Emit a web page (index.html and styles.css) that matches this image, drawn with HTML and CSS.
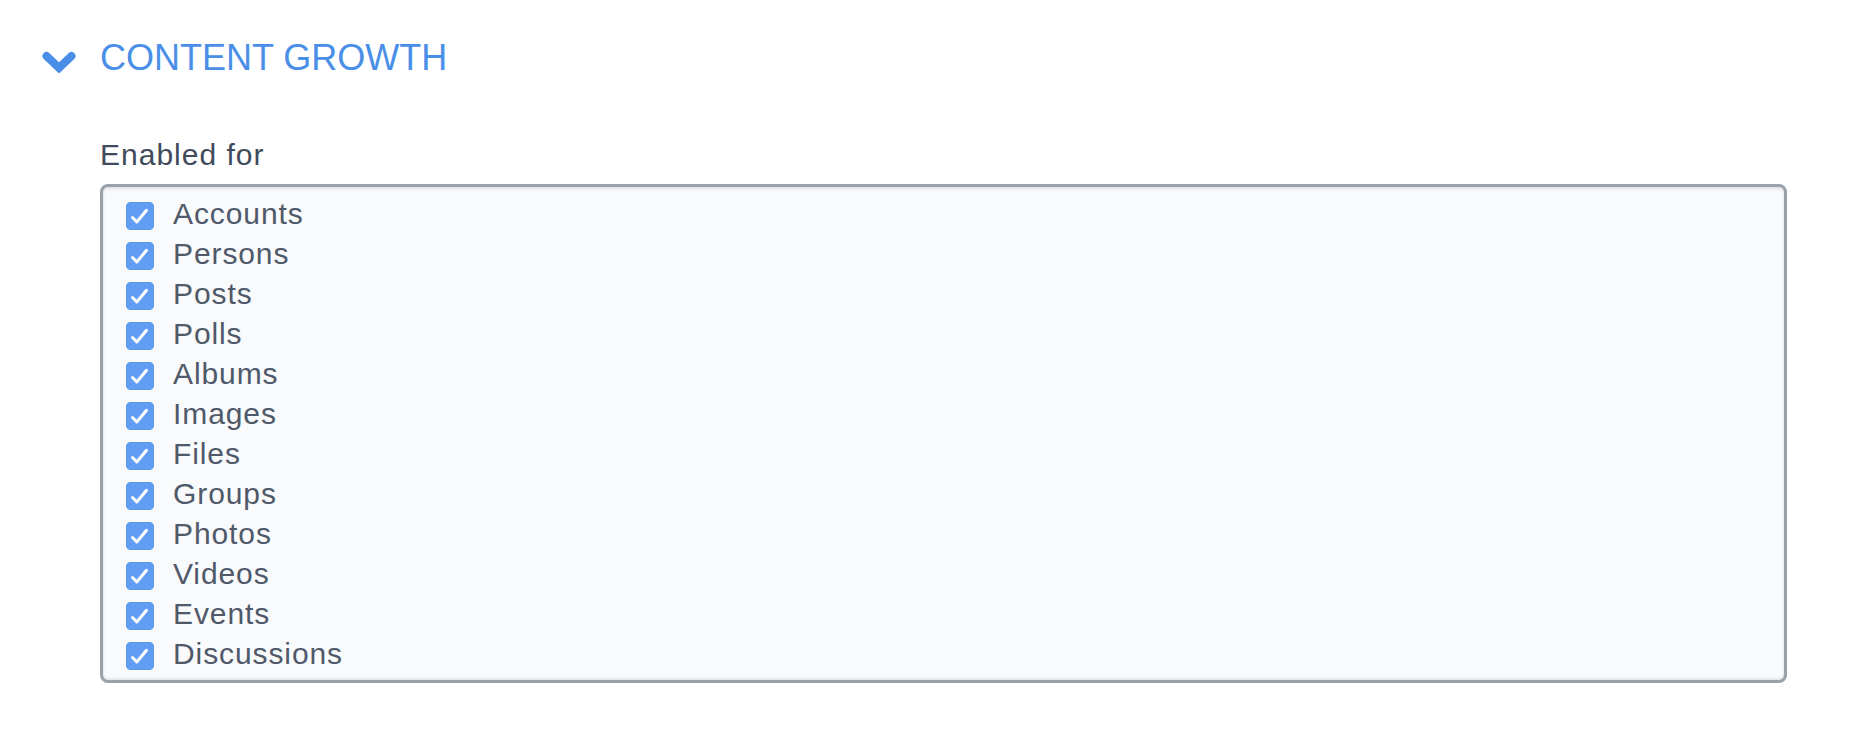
FILE: index.html
```html
<!DOCTYPE html>
<html>
<head>
<meta charset="utf-8">
<link rel="stylesheet" href="styles.css">
</head>
<body>
<section class="panel">
  <div class="panel-head">
    <svg class="chevron" width="34" height="22" viewBox="0 0 34 22"><polyline points="4.5,5 17,17 29.5,5" fill="none" stroke="#4a8fe7" stroke-width="8" stroke-linecap="round" stroke-linejoin="miter"/></svg>
    <h2 class="panel-title">CONTENT GROWTH</h2>
  </div>
  <div class="panel-body">
    <div class="field-label">Enabled for</div>
    <div class="check-list">
      <label class="check-row"><span class="box"><svg width="28" height="28" viewBox="0 0 28 28"><polyline points="6.5,15.5 10.8,20 20.5,8.3" fill="none" stroke="#fff" stroke-width="3" stroke-linecap="round" stroke-linejoin="round"/></svg></span><span class="check-text">Accounts</span></label>
      <label class="check-row"><span class="box"><svg width="28" height="28" viewBox="0 0 28 28"><polyline points="6.5,15.5 10.8,20 20.5,8.3" fill="none" stroke="#fff" stroke-width="3" stroke-linecap="round" stroke-linejoin="round"/></svg></span><span class="check-text">Persons</span></label>
      <label class="check-row"><span class="box"><svg width="28" height="28" viewBox="0 0 28 28"><polyline points="6.5,15.5 10.8,20 20.5,8.3" fill="none" stroke="#fff" stroke-width="3" stroke-linecap="round" stroke-linejoin="round"/></svg></span><span class="check-text">Posts</span></label>
      <label class="check-row"><span class="box"><svg width="28" height="28" viewBox="0 0 28 28"><polyline points="6.5,15.5 10.8,20 20.5,8.3" fill="none" stroke="#fff" stroke-width="3" stroke-linecap="round" stroke-linejoin="round"/></svg></span><span class="check-text">Polls</span></label>
      <label class="check-row"><span class="box"><svg width="28" height="28" viewBox="0 0 28 28"><polyline points="6.5,15.5 10.8,20 20.5,8.3" fill="none" stroke="#fff" stroke-width="3" stroke-linecap="round" stroke-linejoin="round"/></svg></span><span class="check-text">Albums</span></label>
      <label class="check-row"><span class="box"><svg width="28" height="28" viewBox="0 0 28 28"><polyline points="6.5,15.5 10.8,20 20.5,8.3" fill="none" stroke="#fff" stroke-width="3" stroke-linecap="round" stroke-linejoin="round"/></svg></span><span class="check-text">Images</span></label>
      <label class="check-row"><span class="box"><svg width="28" height="28" viewBox="0 0 28 28"><polyline points="6.5,15.5 10.8,20 20.5,8.3" fill="none" stroke="#fff" stroke-width="3" stroke-linecap="round" stroke-linejoin="round"/></svg></span><span class="check-text">Files</span></label>
      <label class="check-row"><span class="box"><svg width="28" height="28" viewBox="0 0 28 28"><polyline points="6.5,15.5 10.8,20 20.5,8.3" fill="none" stroke="#fff" stroke-width="3" stroke-linecap="round" stroke-linejoin="round"/></svg></span><span class="check-text">Groups</span></label>
      <label class="check-row"><span class="box"><svg width="28" height="28" viewBox="0 0 28 28"><polyline points="6.5,15.5 10.8,20 20.5,8.3" fill="none" stroke="#fff" stroke-width="3" stroke-linecap="round" stroke-linejoin="round"/></svg></span><span class="check-text">Photos</span></label>
      <label class="check-row"><span class="box"><svg width="28" height="28" viewBox="0 0 28 28"><polyline points="6.5,15.5 10.8,20 20.5,8.3" fill="none" stroke="#fff" stroke-width="3" stroke-linecap="round" stroke-linejoin="round"/></svg></span><span class="check-text">Videos</span></label>
      <label class="check-row"><span class="box"><svg width="28" height="28" viewBox="0 0 28 28"><polyline points="6.5,15.5 10.8,20 20.5,8.3" fill="none" stroke="#fff" stroke-width="3" stroke-linecap="round" stroke-linejoin="round"/></svg></span><span class="check-text">Events</span></label>
      <label class="check-row"><span class="box"><svg width="28" height="28" viewBox="0 0 28 28"><polyline points="6.5,15.5 10.8,20 20.5,8.3" fill="none" stroke="#fff" stroke-width="3" stroke-linecap="round" stroke-linejoin="round"/></svg></span><span class="check-text">Discussions</span></label>
    </div>
  </div>
</section>
</body>
</html>
```

FILE: styles.css
```css
html, body {
  margin: 0;
  padding: 0;
  background: #ffffff;
  font-family: "Liberation Sans", Arial, sans-serif;
}

.panel {
  display: flex;
  flex-direction: column;
  padding-top: 36px;
}

.panel-head {
  display: flex;
  align-items: flex-start;
  padding-left: 42px;
  gap: 24px;
}

.chevron {
  display: block;
  flex: none;
  margin-top: 15px;
}

.panel-title {
  margin: 0;
  font-size: 36px;
  line-height: 44px;
  font-weight: normal;
  color: #4a8fe7;
}

.panel-body {
  display: flex;
  flex-direction: column;
  padding-left: 100px;
  padding-right: 65px;
  padding-top: 57px;
}

.field-label {
  font-size: 30px;
  line-height: 36px;
  color: #3f4b5b;
  letter-spacing: 1px;
  margin-bottom: 11px;
}

.check-list {
  display: flex;
  flex-direction: column;
  border: 3px solid #99a2ac;
  border-radius: 8px;
  background: #f9fafc;
  box-shadow: inset 0 2px 3px rgba(0, 0, 0, 0.1), inset 0 -2px 2px rgba(0, 0, 0, 0.07);
  padding: 7px 0 6px 23px;
}

.check-row {
  display: flex;
  align-items: flex-start;
  height: 40px;
  gap: 19px;
}

.box {
  display: block;
  flex: none;
  width: 28px;
  height: 28px;
  margin-top: 8px;
  border-radius: 5px;
  background: #609df3;
  box-shadow: inset 0 0 0 1px #5a96ec;
}

.box svg {
  display: block;
}

.check-text {
  font-size: 30px;
  line-height: 40px;
  color: #4f5969;
  letter-spacing: 0.9px;
}
```
